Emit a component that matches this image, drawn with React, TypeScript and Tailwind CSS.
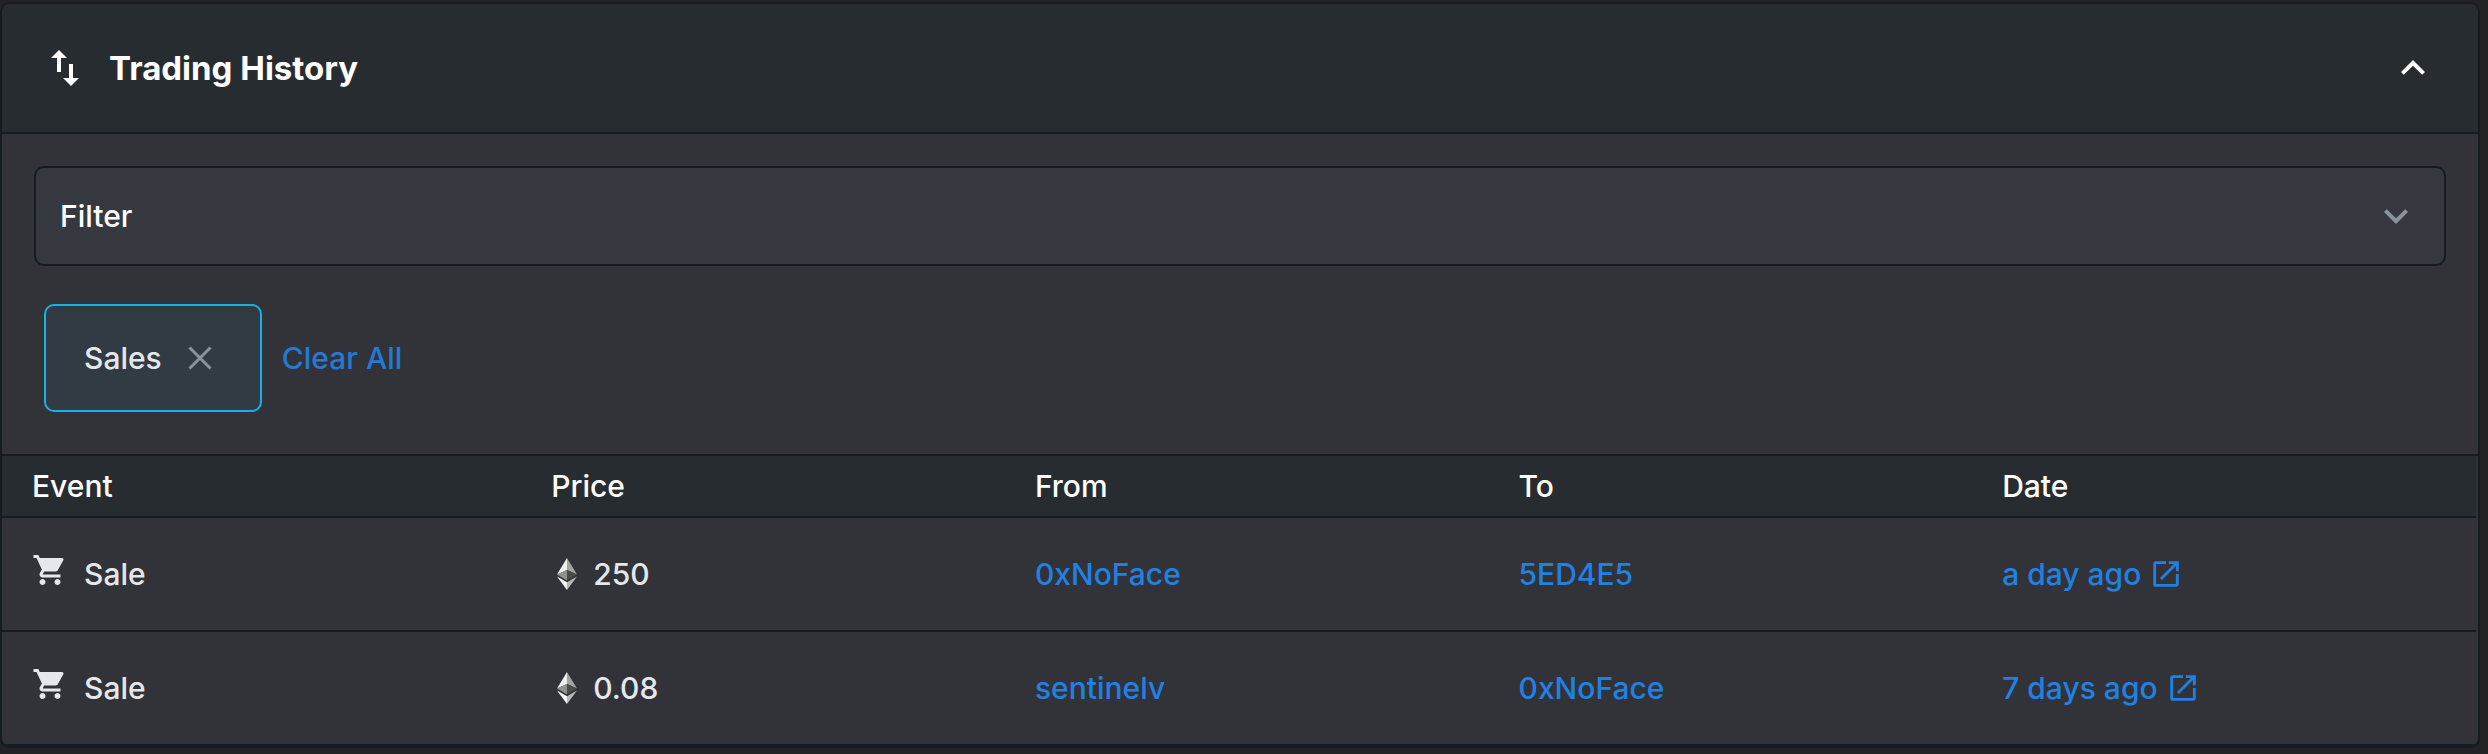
import {
  MdExpandLess,
  MdExpandMore,
  MdOpenInNew,
  MdShoppingCart,
  MdSwapVert,
} from "react-icons/md";

const sales = [
  { price: "250", from: "0xNoFace", to: "5ED4E5", date: "a day ago" },
  { price: "0.08", from: "sentinelv", to: "0xNoFace", date: "7 days ago" },
];

function EthIcon() {
  return (
    <svg viewBox="0 0 20 32" className="h-8 w-5" aria-hidden="true">
      <path fill="#efefed" d="M10 0 0 16.6 10 12z" />
      <path fill="#a3a3a1" d="M10 0 20 16.6 10 12z" />
      <path fill="#90908e" d="M10 12 0 16.6 10 22.4z" />
      <path fill="#4a4a4a" d="M10 12 20 16.6 10 22.4z" />
      <path fill="#f5f5f3" d="M0 18.4 10 24.2V32z" />
      <path fill="#b9b9b5" d="M20 18.4 10 24.2V32z" />
    </svg>
  );
}

function CloseIcon() {
  return (
    <svg
      viewBox="0 0 24 24"
      className="size-6 text-[#8a939b]"
      fill="none"
      stroke="currentColor"
      strokeWidth="3"
      aria-hidden="true"
    >
      <path d="M1.5 1.5l21 21M22.5 1.5l-21 21" />
    </svg>
  );
}

export default function App() {
  return (
    <main className="min-h-screen bg-[#222226] pt-0.5 pr-2 font-['Inter',sans-serif] text-[30px] leading-[44px] text-[#e5e8eb]">
      <section className="overflow-hidden rounded-[10px] border-2 border-[#151b22] bg-[#323338]">
        <h2 className="border-b-2 border-[#151b22] bg-[#272c30]">
          <button
            type="button"
            aria-expanded="true"
            className="flex w-full items-center py-10 pr-[41px] pl-[39px] text-left text-[33px] leading-[48px] font-bold text-white"
          >
            <MdSwapVert className="size-12" />
            <span className="ml-5 flex-1">Trading History</span>
            <MdExpandLess className="size-12" />
          </button>
        </h2>

        <div className="p-8 pb-[42px]">
          <button
            type="button"
            aria-expanded="false"
            className="flex h-[100px] w-full items-center justify-between rounded-[10px] border-2 border-[#151b22] bg-[#363840] px-6 text-left font-medium text-white"
          >
            Filter
            <MdExpandMore className="size-12 text-[#8a939b]" />
          </button>

          <div className="mt-[38px] flex items-center gap-5 pl-2.5">
            <button
              type="button"
              aria-label="Remove Sales"
              className="flex h-[108px] items-center gap-[26px] rounded-[10px] border-2 border-[#15b2e5] bg-[#323a44] pr-12 pl-[38px] font-medium"
            >
              Sales
              <CloseIcon />
            </button>
            <button type="button" className="font-medium text-[#2479d2]">
              Clear All
            </button>
          </div>
        </div>

        <div className="border-t-2 border-[#151b22] pr-0.5">
          <table className="w-full table-fixed border-separate border-spacing-0 text-left">
            <thead>
              <tr className="bg-[#272c30] text-white *:h-[62px] *:border-b-2 *:border-[#151b22] *:font-medium">
                <th className="w-[22.2%] pl-[30px]">Event</th>
                <th className="w-[19.55%]">Price</th>
                <th className="w-[19.55%]">From</th>
                <th className="w-[19.55%]">To</th>
                <th>Date</th>
              </tr>
            </thead>
            <tbody>
              {sales.map((sale) => (
                <tr
                  key={sale.date}
                  className="*:h-[114px] *:border-b-2 *:border-[#151b22] *:font-medium"
                >
                  <td className="pl-[30px]">
                    <div className="flex items-center gap-4">
                      <MdShoppingCart className="mb-2 size-9" />
                      Sale
                    </div>
                  </td>
                  <td>
                    <div className="flex items-center gap-4 pl-1.5">
                      <EthIcon />
                      {sale.price}
                    </div>
                  </td>
                  <td>
                    <a href="#from" className="text-[#2081e2]">
                      {sale.from}
                    </a>
                  </td>
                  <td>
                    <a href="#to" className="text-[#2081e2]">
                      {sale.to}
                    </a>
                  </td>
                  <td>
                    <a
                      href="#transaction"
                      className="inline-flex items-center gap-2 text-[#2081e2]"
                    >
                      {sale.date}
                      <MdOpenInNew className="size-[34px]" />
                    </a>
                  </td>
                </tr>
              ))}
            </tbody>
          </table>
        </div>
      </section>
    </main>
  );
}
